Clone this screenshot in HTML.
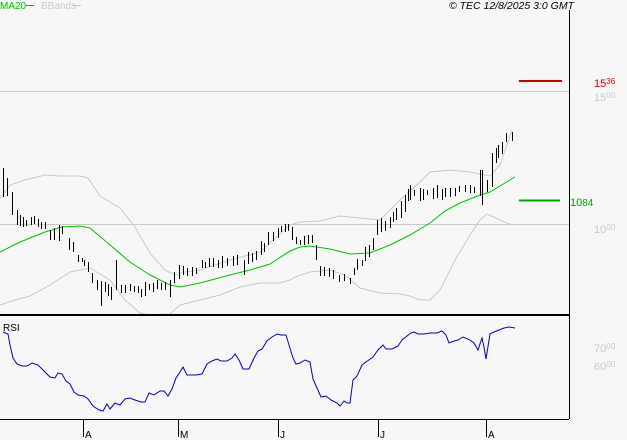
<!DOCTYPE html>
<html><head><meta charset="utf-8"><style>
html,body{margin:0;padding:0;background:#f7f7f7;width:627px;height:440px;overflow:hidden}
svg{display:block}
text{font-family:"Liberation Sans",sans-serif}
</style></head><body>
<svg width="627" height="440" viewBox="0 0 627 440" xmlns="http://www.w3.org/2000/svg">
<rect width="627" height="440" fill="#f7f7f7"/>
<text x="0" y="9" font-size="10" fill="#00c000">MA20</text>
<line x1="26" y1="5.5" x2="34" y2="5.5" stroke="#00c000" stroke-width="1"/>
<text x="41" y="9" font-size="10" fill="#c8c8c8">BBands</text>
<line x1="73" y1="5.5" x2="81" y2="5.5" stroke="#c8c8c8"/>
<text x="574" y="9" font-size="10.5" font-style="italic" text-anchor="end" fill="#000">© TEC 12/8/2025 3:0 GMT</text>
<line x1="569.5" y1="10" x2="569.5" y2="419" stroke="#000"/>
<line x1="0" y1="91.5" x2="569" y2="91.5" stroke="#c8c8c8"/>
<line x1="0" y1="224.5" x2="569" y2="224.5" stroke="#c8c8c8"/>
<line x1="519" y1="81" x2="562" y2="81" stroke="#d00000" stroke-width="2"/>
<text x="594" y="87" font-size="11" fill="#d00000">15<tspan font-size="8" dy="-3">36</tspan></text>
<text x="594" y="101" font-size="11" fill="#c8c8c8">15<tspan font-size="8" dy="-3">00</tspan></text>
<line x1="519" y1="200.5" x2="560" y2="200.5" stroke="#00a000" stroke-width="2"/>
<text x="570" y="206" font-size="11" fill="#00a000">10<tspan font-size="10">84</tspan></text>
<text x="594" y="233" font-size="11" fill="#c8c8c8">10<tspan font-size="8" dy="-3">00</tspan></text>
<polyline fill="none" stroke="#c8c8c8" points="0,198 10,185 25,180 45,175 60,176 80,176 88,178 100,196 120,208 135,227 150,253 165,270 175,275 185,272 200,270 230,260 260,252 290,225 300,222 320,221 340,216 360,218 380,220 400,200 420,182 430,172 450,170 470,172 490,176 500,165 512,130"/>
<polyline fill="none" stroke="#c8c8c8" points="0,305 15,300 30,296 50,285 70,272 90,268 110,280 125,300 140,313 150,315 170,314 180,305 200,300 220,295 240,287 260,283 280,283 290,280 295,277 310,272 330,270 345,275 360,288 380,293 400,294 410,296 420,300 430,300 440,290 455,260 470,235 480,220 487,214 500,220 512,225"/>
<polyline fill="none" stroke="#00c000" points="0,252 20,242 45,232 62,227 80,226 90,228 110,245 130,262 150,275 170,285 180,287 200,283 230,275 250,270 270,264 290,251 300,247 310,246 330,249 350,254 370,253 390,245 410,235 430,223 445,211 460,203 480,195 490,192 500,186 510,180 515,177"/>
<path transform="translate(0.5,0)" shape-rendering="crispEdges" fill="none" stroke="#000" stroke-width="1" d="M3 168V197M7 178V196M12 192V215M17 210V225M20 215V226M23 217V227M26 220V226M31 217V225M34 216V224M38 219V227M41 222V229M45 222V229M50 230V240M54 228V240M59 225V241M62 226V234M69 238V250M73 242V252M78 255V262M82 258V262M84 260V266M88 262V272M92 273V283M97 280V290M101 281V306M105 282V292M108 284V296M111 287V300M116 260V290M121 285V293M125 285V293M130 284V291M134 286V292M138 286V293M141 289V297M145 282V296M149 284V290M153 283V292M157 280V289M161 283V290M165 282V290M170 280V297M174 272V283M179 265V279M183 266V275M187 268V276M192 267V276M196 268V274M202 260V268M205 262V268M209 258V267M213 258V267M218 260V268M222 256V268M227 258V266M233 256V266M237 255V265M244 260V275M248 252V264M252 253V262M256 251V260M261 241V255M264 243V252M268 232V245M273 232V241M278 228V238M281 226V232M285 224V232M288 224V231M292 227V240M296 237V244M300 240V245M304 236V245M308 235V244M312 235V243M316 245V260M320 266V276M324 267V276M329 268V277M333 270V279M339 275V282M344 274V281M350 278V284M354 268V275M357 259V270M362 260V266M365 247V261M369 245V257M373 238V250M377 220V235M381 218V232M385 221V231M390 217V228M393 212V222M396 208V220M401 201V218M405 195V212M408 189V201M410 185V200M414 190V196M420 188V201M423 189V200M427 190V195M433 188V199M437 185V198M442 189V200M445 188V197M450 188V197M455 188V196M459 186V192M465 185V192M470 185V193M474 187V193M480 170V196M482 170V205M487 180V192M492 153V187M496 148V163M498 145V158M502 142V154M506 133V142M512 132V141"/>
<line x1="0" y1="315" x2="569" y2="315" stroke="#000" stroke-width="2"/>
<line x1="0" y1="419.5" x2="569" y2="419.5" stroke="#000"/>
<text x="3" y="331" font-size="10" fill="#000">RSI</text>
<text x="594" y="352" font-size="11" fill="#c8c8c8">70<tspan font-size="8" dy="-3">00</tspan></text>
<text x="594" y="370" font-size="11" fill="#c8c8c8">60<tspan font-size="8" dy="-3">00</tspan></text>
<polyline fill="none" stroke="#0000cc" points="3,332 8,334 10,345 13,358 17,364 22,366 27,366 32,363 38,365 44,371 50,377 55,378 58,373 62,374 66,381 70,384 74,392 78,395 84,396 88,399 93,406 99,410 103,411 107,404 110,409 115,403 120,405 125,399 130,398 135,400 141,402 145,402 149,393 154,395 160,391 164,391 168,396 172,389 176,378 180,372 183,367 187,375 196,375 202,374 207,364 212,361 217,359 221,361 227,361 232,358 235,354 239,360 243,369 249,369 254,358 258,351 262,349 267,341 272,337 277,334 281,335 286,335 289,345 293,358 296,364 300,363 305,360 310,362 313,379 317,388 321,397 326,396 331,400 337,403 340,406 344,401 347,403 350,403 353,380 357,376 362,365 366,362 373,357 378,350 383,345 386,349 392,349 398,346 402,340 407,336 411,333 414,332 418,334 424,334 430,333 437,333 442,331 446,335 449,343 454,341 458,340 463,337 470,340 474,343 478,350 482,338 484,347 486,359 490,334 494,332 499,330 504,328 509,327 515,328"/>
<g stroke="#000"><line x1="83.5" y1="419" x2="83.5" y2="437"/><line x1="178.5" y1="419" x2="178.5" y2="437"/><line x1="278.5" y1="419" x2="278.5" y2="437"/><line x1="378.5" y1="419" x2="378.5" y2="437"/><line x1="486.5" y1="419" x2="486.5" y2="437"/></g>
<g font-size="10" fill="#000"><text x="85" y="438">A</text><text x="180" y="438">M</text><text x="280" y="438">J</text><text x="380" y="438">J</text><text x="488" y="438">A</text></g>
</svg>
</body></html>
